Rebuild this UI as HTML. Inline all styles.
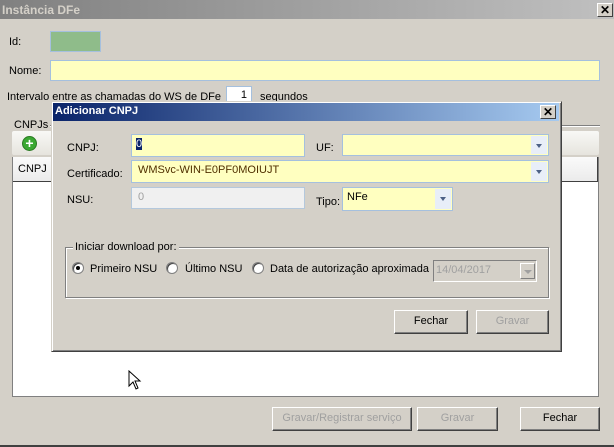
<!DOCTYPE html>
<html><head><meta charset="utf-8"><style>
*{box-sizing:border-box;margin:0;padding:0}
body{width:614px;height:447px;background:#d4d0c8;font-family:"Liberation Sans",sans-serif;font-size:11px;color:#000;position:relative;overflow:hidden}
.a{position:absolute}
.lbl{position:absolute;font-size:11px;white-space:nowrap}
.y{background:#ffffc0;border:1px solid #a5c0de}
.btn{position:absolute;background:#d4d0c8;border:1px solid;border-color:#fff #404040 #404040 #fff;box-shadow:inset -1px -1px 0 #808080;text-align:center;font-size:11px;line-height:21px}
.dis{color:#a0a0a0}
.cb{position:absolute;right:1px;top:1px;bottom:1px;width:16px;background:#e8eef8}
.cb:after{content:"";position:absolute;left:5px;top:8px;border-left:3.5px solid transparent;border-right:3.5px solid transparent;border-top:4px solid #4d6185}
.xb{position:absolute;width:16px;height:14px;background:#d4d0c8;border:1px solid;border-color:#fff #404040 #404040 #fff;font-size:12px;font-weight:bold;line-height:12px;text-align:center}
.rad{position:absolute;width:12px;height:12px;border-radius:50%;background:#fff;border:1px solid #808080;box-shadow:inset 1px 1px 0 #404040}
</style></head><body>
<div class="a" style="left:0;top:0;width:614px;height:19px;background:linear-gradient(90deg,#808080,#c0c0c0)"></div>
<div class="lbl" style="left:2px;top:3px;color:#d4d0c8;font-weight:bold;font-size:12px">Instância DFe</div>
<div class="xb" style="left:597px;top:3px">✕</div>
<div class="lbl" style="left:9px;top:36px">Id:</div>
<div class="a" style="left:50px;top:31px;width:51px;height:21px;background:#8fbc8a;border:1px solid #a5c0de"></div>
<div class="lbl" style="left:9px;top:65px">Nome:</div>
<div class="a y" style="left:50px;top:60px;width:550px;height:21px"></div>
<div class="lbl" style="left:7px;top:91px">Intervalo entre as chamadas do WS de DFe</div>
<div class="a" style="left:226px;top:86px;width:26px;height:18px;background:#fff;border:1px solid #a5c0de;text-align:right;padding-right:4px;line-height:16px">1</div>
<div class="lbl" style="left:260px;top:91px">segundos</div>
<div class="a" style="left:14px;top:125px;width:586px;border-top:1px solid #808080;border-bottom:1px solid #fff"></div>
<div class="lbl" style="left:12px;top:119px;background:#d4d0c8;padding:0 2px">CNPJs</div>
<div class="a" style="left:12px;top:131px;width:587px;height:24px;background:linear-gradient(#f8f8f6,#e6e4de);border-radius:2px"></div>
<div class="a" style="left:22px;top:136px;width:15px;height:15px;border-radius:50%;background:#3aa832;border:1px solid #2a7a22;color:#fff;font-weight:bold;font-size:14px;line-height:12px;text-align:center">+</div>
<div class="a" style="left:12px;top:157px;width:587px;height:240px;background:#fff;border:1px solid #808080"></div>
<div class="a" style="left:13px;top:157px;width:585px;height:25px;background:linear-gradient(#fafafa,#ebebeb);border-right:1px solid #404040;border-bottom:1px solid #404040"></div>
<div class="lbl" style="left:18px;top:163px">CNPJ</div>
<svg class="a" style="left:128px;top:370px" width="14" height="22"><path d="M1 1 L1 16 L5 12 L8 19 L10 18 L7 11 L12 11 Z" fill="#fff" stroke="#000"/></svg>
<div class="btn dis" style="left:272px;top:407px;width:140px;height:24px">Gravar/Registrar serviço</div>
<div class="btn dis" style="left:417px;top:407px;width:81px;height:24px">Gravar</div>
<div class="btn" style="left:520px;top:407px;width:80px;height:24px">Fechar</div>
<div class="a" style="left:0;top:445px;width:614px;height:2px;background:#404040"></div>

<!-- dialog -->
<div class="a" style="left:51px;top:101px;width:511px;height:251px;background:#d4d0c8;border:1px solid;border-color:#d4d0c8 #404040 #404040 #d4d0c8;box-shadow:inset 1px 1px 0 #fff,inset -1px -1px 0 #808080"></div>
<div class="a" style="left:53px;top:103px;width:506px;height:18px;background:linear-gradient(90deg,#0a246a,#a6caf0)"></div>
<div class="lbl" style="left:55px;top:105px;color:#fff;font-weight:bold">Adicionar CNPJ</div>
<div class="xb" style="left:540px;top:105px">✕</div>
<div class="lbl" style="left:67px;top:142px">CNPJ:</div>
<div class="a y" style="left:131px;top:134px;width:174px;height:23px;padding:3px 4px"><span style="background:#0a246a;color:#fff">0</span></div>
<div class="lbl" style="left:316px;top:142px">UF:</div>
<div class="a y" style="left:342px;top:134px;width:207px;height:22px"><div class="cb"></div></div>
<div class="lbl" style="left:67px;top:168px">Certificado:</div>
<div class="a y" style="left:131px;top:160px;width:418px;height:23px;padding:3px 6px;color:#503000">WMSvc-WIN-E0PF0MOIUJT<div class="cb"></div></div>
<div class="lbl" style="left:67px;top:194px">NSU:</div>
<div class="a" style="left:131px;top:187px;width:174px;height:22px;background:#f0f0f0;border:1px solid #b4c8dc;padding:3px 6px;color:#a0a0a0">0</div>
<div class="lbl" style="left:316px;top:196px">Tipo:</div>
<div class="a y" style="left:342px;top:187px;width:111px;height:24px;padding:3px 4px">NFe<div class="cb"></div></div>
<div class="a" style="left:65px;top:247px;width:484px;height:51px;border:1px solid #808080;box-shadow:1px 1px 0 #fff,inset 1px 1px 0 #fff"></div>
<div class="lbl" style="left:73px;top:241px;background:#d4d0c8;padding:0 2px">Iniciar download por:</div>
<div class="rad" style="left:72px;top:262px"><div class="a" style="left:3px;top:3px;width:4px;height:4px;border-radius:50%;background:#000"></div></div>
<div class="lbl" style="left:90px;top:263px">Primeiro NSU</div>
<div class="rad" style="left:166px;top:262px"></div>
<div class="lbl" style="left:185px;top:263px">Último NSU</div>
<div class="rad" style="left:252px;top:262px"></div>
<div class="lbl" style="left:270px;top:263px">Data de autorização aproximada</div>
<div class="a" style="left:433px;top:260px;width:104px;height:22px;background:#d4d0c8;border:1px solid;border-color:#808080 #fff #fff #808080;color:#a0a0a0;padding:3px 2px;font-size:11px">14/04/2017<div class="a" style="right:1px;top:2px;width:15px;height:16px;border:1px solid;border-color:#fff #808080 #808080 #fff"><div class="a" style="left:3px;top:6px;border-left:4px solid transparent;border-right:4px solid transparent;border-top:4px solid #a0a0a0"></div></div></div>
<div class="btn" style="left:394px;top:310px;width:74px;height:24px">Fechar</div>
<div class="btn dis" style="left:476px;top:310px;width:73px;height:24px">Gravar</div>
</body></html>
